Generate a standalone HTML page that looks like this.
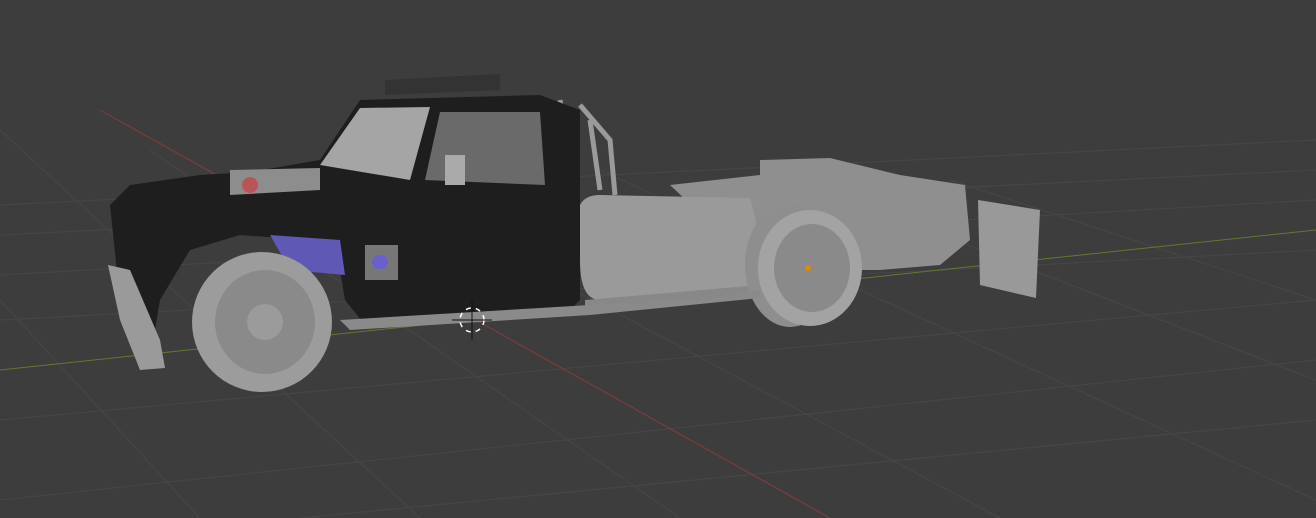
<!DOCTYPE html>
<html><head><style>
html,body{margin:0;padding:0;background:#3d3d3d;width:1316px;height:518px;overflow:hidden}
</style></head><body>
<svg width="1316" height="518" viewBox="0 0 1316 518" xmlns="http://www.w3.org/2000/svg">
<rect width="1316" height="518" fill="#3d3d3d"/>
<g stroke="#474747" stroke-width="1" fill="none">
<line x1="0" y1="205" x2="1316" y2="140"/>
<line x1="0" y1="235" x2="1316" y2="170"/>
<line x1="0" y1="275" x2="1316" y2="200"/>
<line x1="0" y1="320" x2="1316" y2="250"/>
<line x1="0" y1="420" x2="1316" y2="300"/>
<line x1="0" y1="500" x2="1316" y2="360"/>
<line x1="300" y1="518" x2="1316" y2="420"/>
<line x1="0" y1="130" x2="420" y2="518"/>
<line x1="150" y1="150" x2="680" y2="518"/>
<line x1="350" y1="170" x2="1000" y2="518"/>
<line x1="600" y1="170" x2="1316" y2="500"/>
<line x1="800" y1="180" x2="1316" y2="380"/>
<line x1="950" y1="180" x2="1316" y2="300"/>
<line x1="0" y1="300" x2="200" y2="518"/>
</g>
<line x1="0" y1="370" x2="1316" y2="230" stroke="#5f7a33" stroke-width="1"/>
<line x1="100" y1="110" x2="830" y2="518" stroke="#8a3a3a" stroke-width="1"/>
<!-- rear chassis -->
<path d="M670 185 L760 175 L760 160 L830 158 L900 175 L965 185 L970 240 L940 265 L880 270 L760 270 Z" fill="#8f8f8f"/>
<g stroke="#9a9a9a" stroke-width="5" fill="none">
<path d="M560 100 L575 200"/><path d="M580 105 L610 140 L615 195"/><path d="M590 120 L600 190"/>
</g>
<!-- mudflap -->
<path d="M978 200 L1040 210 L1036 298 L980 285 Z" fill="#999"/>
<!-- tank -->
<path d="M580 205 Q585 195 600 195 L750 198 Q765 245 750 290 L600 300 Q580 300 580 260 Z" fill="#9a9a9a"/>
<path d="M585 300 L760 285 L760 295 L585 310 Z" fill="#888"/>
<!-- rear wheel -->
<ellipse cx="790" cy="265" rx="45" ry="62" fill="#8e8e8e"/>
<ellipse cx="810" cy="268" rx="52" ry="58" fill="#a3a3a3"/>
<ellipse cx="812" cy="268" rx="38" ry="44" fill="#8a8a8a"/>
<circle cx="808" cy="268" r="3" fill="#e08a00"/>
<!-- cab -->
<path d="M110 205 L130 185 L200 175 L250 172 L320 160 L360 100 L540 95 L580 110 L580 300 L570 310 L365 325 L345 300 L340 270 L310 240 L240 235 L190 250 L160 300 L155 330 L130 330 L120 300 Z" fill="#1e1e1e"/>
<path d="M320 165 L360 108 L430 107 L410 180 Z" fill="#a5a5a5"/>
<path d="M425 180 L440 112 L540 112 L545 185 Z" fill="#6a6a6a"/>
<path d="M230 170 L320 168 L320 190 L230 195 Z" fill="#8d8d8d"/>
<circle cx="250" cy="185" r="8" fill="#b55"/>
<rect x="445" y="155" width="20" height="30" fill="#aaa"/>
<path d="M365 245 L398 245 L398 280 L365 280 Z" fill="#777"/>
<ellipse cx="380" cy="262" rx="8" ry="7" fill="#6a5fd0"/>
<path d="M270 235 L340 240 L345 275 L290 270 Z" fill="#5f58b5"/>
<!-- bumper -->
<path d="M108 265 L130 270 L160 340 L165 368 L140 370 L120 320 Z" fill="#9a9a9a"/>
<path d="M385 80 L500 74 L500 90 L385 95 Z" fill="#333"/>
<!-- front wheel -->
<ellipse cx="262" cy="322" rx="70" ry="70" fill="#9c9c9c"/>
<ellipse cx="265" cy="322" rx="50" ry="52" fill="#8a8a8a"/>
<ellipse cx="265" cy="322" rx="18" ry="18" fill="#9b9b9b"/>
<path d="M340 320 L590 305 L700 300 L760 290 L760 298 L590 315 L350 330 Z" fill="#8a8a8a"/>
<!-- cursor -->
<circle cx="472" cy="320" r="12" fill="none" stroke="#fff" stroke-width="1.5" stroke-dasharray="5 5"/>
<line x1="472" y1="300" x2="472" y2="340" stroke="#111" stroke-width="1"/>
<line x1="452" y1="320" x2="492" y2="320" stroke="#111" stroke-width="1"/>
</svg>
</body></html>
